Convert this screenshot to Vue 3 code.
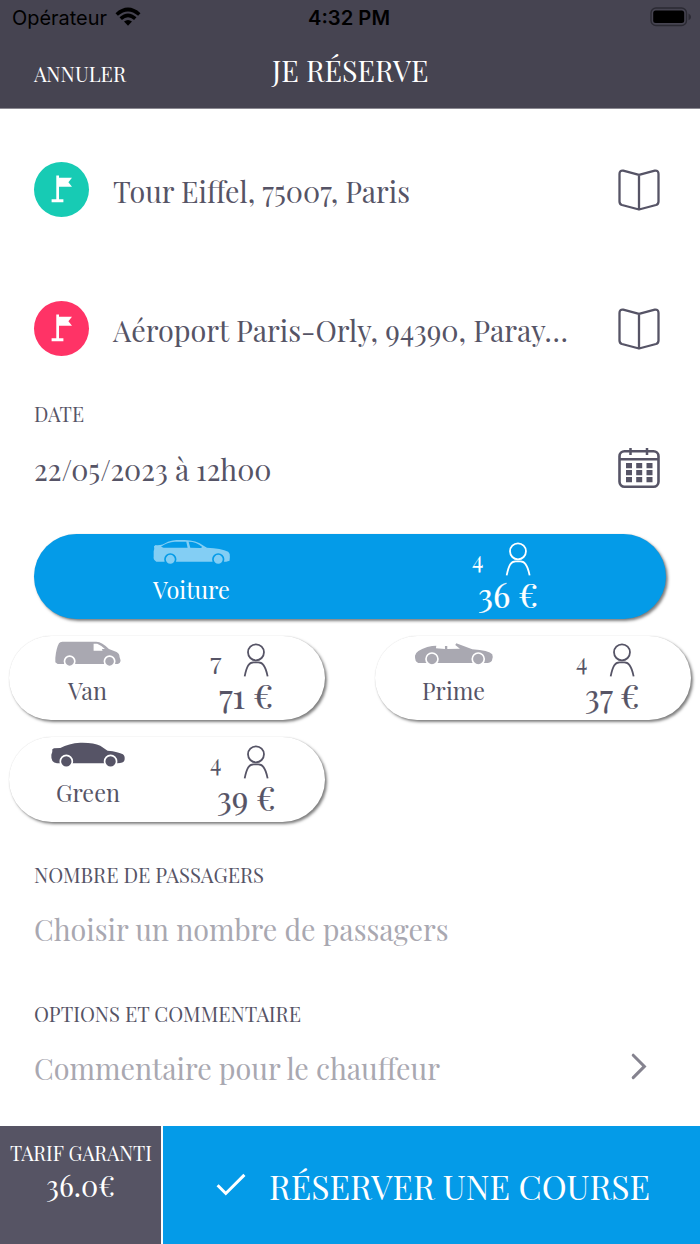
<script setup>
import { h } from 'vue'

// A line of text set to an exact width
const Label = (props) => {
  const size = Number(props.size)
  return h('svg', { class: 'label', width: props.w, height: Math.round(size * 1.2) }, [
    h('text', {
      x: 0, y: size, 'font-size': size, textLength: props.w, lengthAdjust: 'spacingAndGlyphs',
    }, props.text),
  ])
}
Label.props = ['text', 'w', 'size']

const addresses = [
  { tone: 'start', text: 'Tour Eiffel, 75007, Paris', w: 297 },
  { tone: 'end', text: 'Aéroport Paris-Orly, 94390, Paray…', w: 455 },
]

const vehicles = [
  {
    name: 'Voiture', w: 77, seats: '4', price: '36 €', pw: 60, active: true,
    box: '460 58 232 76',
    body: 'M462 95Q465 90 463 80L468 76Q484 79 505 66Q522 61 530 61L555 61Q590 62 612 78L622 84Q665 86 686 96Q692 101 691 112L690 123L680 126H470Q460 121 462 110Z',
    glass: 'M484 81Q502 67 526 66H560L564 84L492 84ZM567 66Q590 66 608 82L604 85L572 84Z',
    wheels: [512, 656], wy: 119, r: 16,
  },
  {
    name: 'Van', w: 39, seats: '7', price: '71 €', pw: 54,
    box: '164 364 197 76',
    body: 'M165 428V414Q168 385 176 371Q179 366 186 366H288Q306 367 326 388L349 397Q358 402 358 412L361 422Q361 431 352 433H172Z',
    glass: 'M280 372H291Q303 377 314 388L305 388L307 393H280Z',
    wheels: [208, 328], wy: 425, r: 15.5,
  },
  {
    name: 'Prime', w: 63, seats: '4', price: '37 €', pw: 54.5,
    box: '195 364 235 76',
    body: 'M198 408Q200 393 235 382Q250 378 262 378L261 386L288 388V379H295V388L333 387L319 376L322 371L370 389Q420 392 430 404Q434 412 429 423Q425 430 410 430H208Q197 426 198 408Z',
    wheels: [249, 388], wy: 418, r: 18,
  },
  {
    name: 'Green', w: 64, seats: '4', price: '39 €', pw: 58.5, dark: true,
    box: '152 667 222 76',
    body: 'M153 705Q157 700 156 689L161 686L180 685Q205 671 240 669Q280 668 300 678L322 693Q355 696 368 704Q375 709 373 721Q371 731 350 731H170Q151 729 153 705Z',
    wheels: [198, 331], wy: 725, r: 18,
  },
]
</script>

<template>
  <main class="screen">
    <header class="top">
      <div class="status">
        <div class="carrier">
          <Label class="sans" text="Opérateur" w="95" size="20" />
          <svg class="wifi" width="26" height="20" viewBox="0 0 26 20">
            <g fill="none" stroke="#000" stroke-width="3.6">
              <path d="M1.7 7.5Q13-2.5 24.3 7.5" />
              <path d="M5.7 11.7Q13 5.2 20.3 11.7" />
            </g>
            <path d="M9 14.6Q13 11.4 17 14.6L13 18.8Z" />
          </svg>
        </div>
        <Label class="sans clock" text="4:32 PM" w="82" size="19.5" />
        <svg class="battery" width="42" height="20" viewBox="0 0 42 20">
          <rect x="1" y="1" width="35.5" height="17.5" rx="5" fill="none" stroke="#2b2a33" stroke-width="1.4" />
          <rect x="3.2" y="3.6" width="31" height="12.3" rx="2.5" />
          <path d="M38.5 6.5Q41 7.5 41 10T38.5 13.3Z" fill="#2b2a33" />
        </svg>
      </div>
      <div class="nav">
        <Label text="ANNULER" w="92" size="21.3" />
        <Label class="title" text="JE RÉSERVE" w="156.5" size="29.5" />
        <span></span>
      </div>
    </header>

    <section class="form">
      <div v-for="a in addresses" :key="a.tone" class="row address">
        <span class="pin" :class="a.tone">
          <svg width="22" height="28" viewBox="0 0 22 28">
            <path d="M5.3.5H8V2.7H21L17.4 7.2 21 11.8H8V24.3H12.4V27.2H.6V24.3H5.3Z" fill="#fff" />
          </svg>
        </span>
        <Label :text="a.text" :w="a.w" size="30" />
        <svg class="tool" width="42" height="42" viewBox="0 0 42 42">
          <path d="M21 5.8 5.2 1.6Q1.5 1.2 1.5 5V32.5Q1.5 35.2 4 36L21 40.5 38 36Q40.5 35.2 40.5 32.5V5Q40.5 1.2 36.8 1.6ZM21 5.8V40" fill="none" stroke="currentColor" stroke-width="2.3" stroke-linejoin="round" />
        </svg>
      </div>

      <Label text="DATE" w="50" size="21.3" />
      <div class="row date">
        <Label text="22/05/2023 à 12h00" w="237.5" size="30" />
        <svg class="tool" width="42" height="42" viewBox="0 0 42 42">
          <rect x="1.5" y="4.3" width="39" height="35.5" rx="5" fill="none" stroke="currentColor" stroke-width="2.6" />
          <path d="M2 12.3H40M12.5 1V8M29 1V8" fill="none" stroke="currentColor" stroke-width="2.5" />
          <path d="M8 16h6v5.2H8zM18.2 16h6v5.2h-6zM28.5 16h6v5.2h-6zM8 23h6v5.2H8zM18.2 23h6v5.2h-6zM28.5 23h6v5.2h-6zM8 30h6v5.2H8zM18.2 30h6v5.2h-6zM28.5 30h6v5.2h-6z" fill="currentColor" />
        </svg>
      </div>
    </section>

    <section class="vehicles">
      <article v-for="v in vehicles" :key="v.name" class="pill" :class="{ active: v.active, dark: v.dark }">
        <div class="model">
          <svg class="car" :viewBox="v.box" height="25.3">
            <path :d="v.body" />
            <path v-if="v.glass" class="glass" :d="v.glass" />
            <circle v-for="x in v.wheels" :key="x" class="wheel" :cx="x" :cy="v.wy" :r="v.r" />
          </svg>
          <Label :text="v.name" :w="v.w" size="24" />
        </div>
        <div class="offer">
          <div class="seats">
            <Label :text="v.seats" w="11.5" size="23.5" />
            <svg width="25.3" height="34" viewBox="0 0 76 102">
              <g fill="none" stroke="currentColor" stroke-width="5.4">
                <circle cx="36" cy="28" r="24" />
                <path d="M2 100Q7 76 13 67Q18 58 29 58H43Q54 58 59 67Q66 76 71 100" />
              </g>
            </svg>
          </div>
          <Label class="price" :text="v.price" :w="v.pw" size="34" />
        </div>
      </article>
    </section>

    <section class="details">
      <Label text="NOMBRE DE PASSAGERS" w="230" size="21.3" />
      <Label class="hint" text="Choisir un nombre de passagers" w="414.5" size="30" />
      <Label class="second" text="OPTIONS ET COMMENTAIRE" w="267" size="21.3" />
      <div class="comment">
        <Label class="hint" text="Commentaire pour le chauffeur" w="406" size="30" />
        <svg width="16" height="27" viewBox="0 0 16 27">
          <path d="M2.2 2.2 13.4 13.4 2.2 24.6" fill="none" stroke="#85838f" stroke-width="3" stroke-linecap="round" />
        </svg>
      </div>
    </section>

    <footer class="bottom">
      <div class="fare">
        <Label text="TARIF GARANTI" w="142" size="21" />
        <Label text="36.0€" w="69" size="30" />
      </div>
      <div class="book">
        <svg width="30" height="24" viewBox="0 0 30 24">
          <path d="M1.6 12.3 9.8 20.5 28.4 1.9" fill="none" stroke="#fff" stroke-width="3" />
        </svg>
        <Label text="RÉSERVER UNE COURSE" w="381" size="34.5" />
      </div>
    </footer>
  </main>
</template>

<style>
body { margin: 0; background: #fff; }
</style>

<style scoped>
.screen {
  width: 700px;
  height: 1244px;
  display: flex;
  flex-direction: column;
  overflow: hidden;
  background: #fff;
  color: #565466;
  font-family: "Playfair Display", "Liberation Serif", serif;
}
.screen svg { display: block; flex: none; overflow: visible; }
.label { fill: currentColor; }
.top { height: 109px; background: #464451; color: #fff; border-bottom: 1px solid #8b8991; box-sizing: border-box; }
.status { display: grid; grid-template-columns: 1fr auto 1fr; height: 36px; padding: 5px 8px 0 12px; box-sizing: border-box; color: #000; }
.sans { font-family: Inter, sans-serif; }
.carrier { display: flex; gap: 8px; }
.wifi { margin-top: 2px; }
.clock { font-weight: 600; margin-left: -3px; margin-right: 3px; }
.battery { justify-self: end; margin-top: 2px; }
.nav { display: grid; grid-template-columns: 1fr auto 1fr; align-items: center; padding: 0 34px; height: 68px; }
.nav > :first-child { margin-top: 7px; }
.nav .title { margin-top: -2px; }
.form { padding: 53px 40px 0 34px; }
.row { height: 55px; display: flex; align-items: center; }
.row .label { margin-top: 2px; }
.address { margin-bottom: 84px; gap: 24px; }
.address + .address { margin-bottom: 45px; }
.tool { margin-left: auto; }
.pin { width: 55px; height: 55px; border-radius: 50%; display: grid; place-items: center; flex: none; }
.pin svg { margin-top: -2px; }
.start { background: #17cbb4; }
.end { background: #ff3366; }
.date { margin-top: 13px; }
.vehicles { display: grid; grid-template-columns: 316px 316px; column-gap: 50px; row-gap: 17px; padding: 39px 9px 0; }
.pill { height: 84.5px; border-radius: 43px; display: grid; grid-template-columns: 1fr 1fr; background: #fff; box-shadow: 2px 2px 3px rgba(0, 0, 0, .5), 0 0 1px rgba(0, 0, 0, .15); }
.pill.active { grid-column: 1 / -1; margin: 0 25px; background: #049be8; color: #fff; }
.model { display: flex; flex-direction: column; align-items: center; padding-top: 5.3px; gap: 10.2px; margin-right: 1px; }
.car { fill: #a9a8b1; }
.active .car { fill: #83cef4; }
.dark .car { fill: #565466; }
.glass { fill: #fff; }
.wheel { stroke: #fff; stroke-width: 5px; }
.active .glass { fill: #049be8; }
.active .wheel { stroke: #049be8; }
.offer { display: flex; flex-direction: column; align-items: center; padding-top: 7.5px; }
.seats { display: flex; gap: 22.5px; align-items: flex-start; height: 32px; margin-right: 13.5px; }
.seats > :first-child { margin-top: 3.5px; }
.price { stroke: currentColor; stroke-width: .2px; }
.details { padding: 40.5px 34px 0; }
.hint { color: #a9a8b1; }
.details > .hint { margin-top: 23px; }
.second { margin-top: 54px; }
.comment { display: flex; justify-content: space-between; align-items: center; margin-top: 23px; padding-right: 19px; }
.comment svg:last-child { margin-top: -3px; }
.bottom { display: flex; gap: 2px; height: 118px; margin-top: auto; flex: none; }
.fare { width: 161px; background: #565464; color: #fff; display: flex; flex-direction: column; align-items: center; padding-top: 14px; box-sizing: border-box; gap: 1.5px; }
.book { flex: 1; display: flex; align-items: center; gap: 23px; padding-left: 53px; background: #049be8; color: #fff; }
</style>
